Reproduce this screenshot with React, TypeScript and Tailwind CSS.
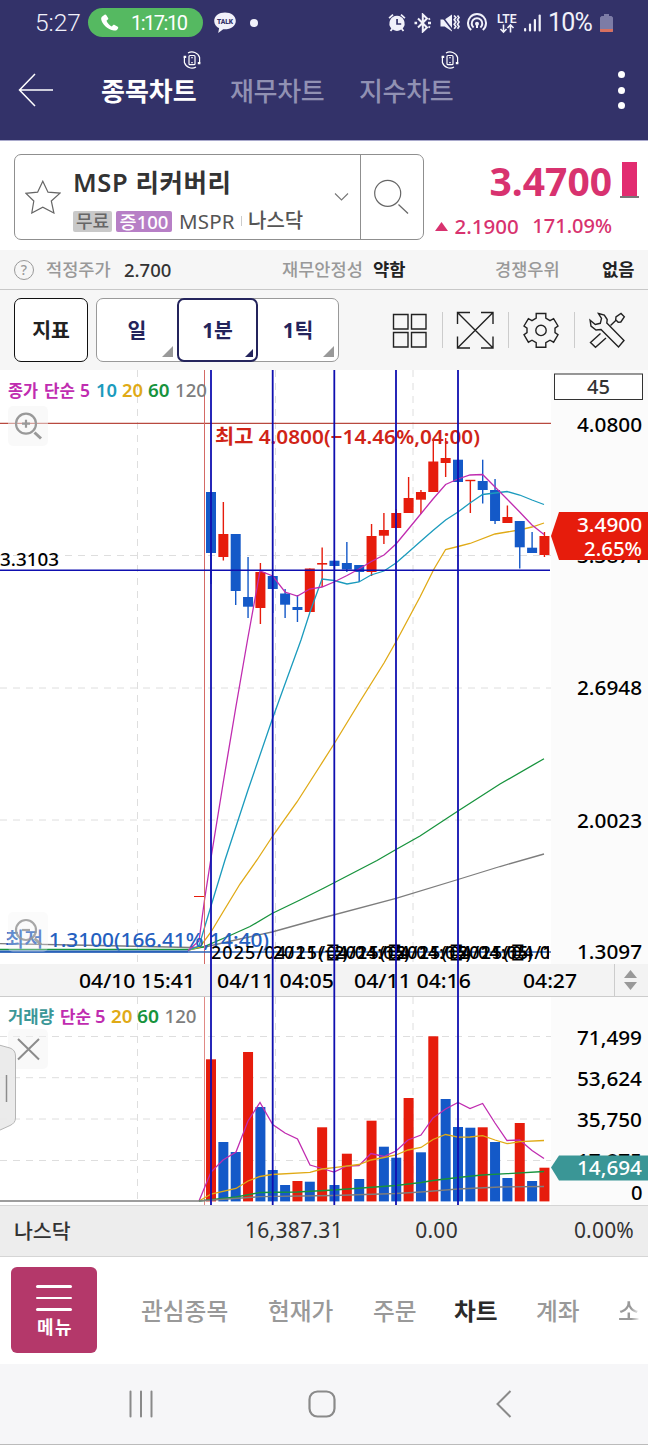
import type { ReactNode } from 'react';
import { clsx } from 'clsx';

const RED = '#e61c0c';
const BLUE = '#1459c8';
const MAGENTA = '#c02cb0';
const CYAN = '#1b9bbd';
const YELLOW = '#e0aa16';
const GREEN = '#17933d';
const GRAY = '#7d7d7d';
const NAVY = '#0f0fb0';

const STEP = 12.35;
const candleX = (index: number) => 211 + STEP * index;

type Candle = {
  up: boolean;
  top: number;
  bottom: number;
  high: number;
  low: number;
  volume: number;
};

const c = (
  up: boolean,
  top: number,
  bottom: number,
  high: number,
  low: number,
  volume: number
): Candle => ({ up, top, bottom, high, low, volume });

// y values are in chart pixels, volume is the top edge of its bar
const candles: Candle[] = [
  c(false, 122, 183, 122, 214, 62.3),
  c(true, 164, 187, 132, 190.5, 145),
  c(false, 164, 221, 164, 235, 155),
  c(false, 227, 236.7, 187, 248, 55),
  c(true, 202, 238, 193, 254, 110),
  c(false, 206, 219, 206, 243, 173),
  c(false, 223.5, 234.7, 219, 248, 188),
  c(false, 237, 240, 225, 252, 184),
  c(true, 198.5, 242, 198.5, 242, 184.7),
  c(true, 193, 194.6, 177.5, 217, 130.3),
  c(false, 190.7, 196, 190.7, 200, 188),
  c(false, 193, 199.5, 172, 202, 156.7),
  c(false, 195, 202, 195, 212, 182),
  c(true, 166, 202, 154, 206, 123.7),
  c(true, 160, 165.7, 143, 174, 149.7),
  c(true, 143, 158, 139, 158, 160.7),
  c(true, 128, 143, 107, 143, 101),
  c(true, 122, 129.7, 120, 144, 155.3),
  c(true, 91.5, 122, 70, 122, 39.3),
  c(true, 88, 93, 68, 107, 102),
  c(false, 89.7, 112, 89.7, 130, 130),
  c(true, 109.8, 111.2, 110, 143, 130.7),
  c(false, 111, 120, 89.7, 133.5, 130.3),
  c(false, 120, 151, 109, 154, 145),
  c(true, 147, 153, 135.5, 153, 181),
  c(false, 151, 177.3, 151, 198.5, 126),
  c(false, 177.7, 183, 162, 183, 184),
  c(true, 166, 185, 162, 187, 170.7),
];

const redVolumes = [0, 3, 7, 9, 11, 13, 16, 18, 22, 25, 27];

const priceLines = [
  {
    color: GRAY,
    points:
      '0,573.7 100,575.5 190,577.5 205,577 240,569 272,562 324,547.5 396,528.3 458,509.5 500,496.5 544,484',
  },
  {
    color: GREEN,
    points:
      '0,579.5 190,579.5 203,577 230,565.5 250,556.5 272,543.5 300,530 324,518 377,490.5 396,479.5 420,466 458,441 500,414 544,388.7',
  },
  {
    color: YELLOW,
    points:
      '188,580.5 200,577 211,562 223,542 240,514 257,490 272.7,466 297,432 320,396 334,374 359,333 384,293 397,270 420,227 434,199 445.6,179.5 458,176.5 470,173.5 495,164 519,160 532,157 544,153',
  },
  {
    color: CYAN,
    points:
      '188,580.5 199,576 211,536 225,490 248,420 272,350 285,314 301,270 310,242 322,209 334,210.5 347,214 359,212 371,205 384,201 396,193 408,182.5 421,171 433,160.5 445.6,150 458,142 470,133 482.6,124.5 495,123 507,121.5 519.7,125 532,130 544,134.5',
  },
  {
    color: MAGENTA,
    points:
      '188,580.5 199,571 204.5,530 211,488 223,414 235.7,338 247.5,270 260,201 272.7,206 285,222 297.4,226 309.7,219 322,217 334,212 347,205.5 359,199 371.4,191.5 384,185 396,174 408,159.5 420.7,144 433,129 445.6,114.5 458,109 470,105 482.6,104.5 495,117 507,129 519.7,142 532,155 544,164.5',
  },
];

const volumeLines = [
  {
    color: MAGENTA,
    points:
      '199,204 211,175 223,163 236,155 248,124 260,105.5 272.7,127.5 285,136 297.5,142 310,168 322,171.5 334,175 347,169 359,168.5 371,156.5 384,159.5 396,154 408,143 421,138 433,121 445.6,112 458,105.5 470,111.5 482.6,106.5 495,126 507,143.5 519.7,143 532,153.5 544,161.5',
  },
  {
    color: YELLOW,
    points:
      '199,204 211,197 236,191.5 248,184 260,179.5 272,177.5 310,175.3 322,172 334,170.7 359,167.5 371,163 384,160.5 396,158 408,153 421,150.5 433,142.5 445.6,137.5 458,140.2 470,140 482.6,138.7 495,143 507,146.7 520,144.7 544,143.5',
  },
  {
    color: GREEN,
    points:
      '199,204 236,200 260,195.5 297,195 334,193 396,188.5 421,185.5 433,183.5 458,180.5 482,178 507,176.7 544,174.5',
  },
  {
    color: GRAY,
    points: '0,204 199,204 260,199.7 334,198.5 396,196.5 421,195 458,192 500,190 544,189.5',
  },
];

const markers = [211, 272.7, 334.3, 396, 458];

const Label = ({
  x,
  y,
  width,
  size = 20,
  weight = 500,
  fill = '#000',
  children,
}: {
  x: number;
  y: number;
  width: number;
  size?: number;
  weight?: number;
  fill?: string;
  children: string;
}) => (
  <text
    x={x}
    y={y}
    fontSize={size}
    fontWeight={weight}
    fill={fill}
    textLength={width}
    lengthAdjust="spacingAndGlyphs"
  >
    {children}
  </text>
);

const RotateIcon = () => (
  <svg width="18" height="18" viewBox="0 0 18 18" fill="none" stroke="#fff" strokeWidth="1.2">
    <path d="M5 2A8 8 0 0 1 16.6 6.500V11.500M13 16A8 8 0 0 1 1.4 11.500V6.500" />
    <path d="M.600 5.800h2.600M14.800 12.200h2.600" strokeWidth="2.200" />
    <rect x="6" y="4.500" width="6" height="9.200" rx="1" />
    <path d="M8.300 6.600h1.400M8.300 11.600h1.400" />
  </svg>
);

const StatusBar = () => (
  <div className="flex h-[45px] items-center pl-[35px] font-[Roboto,sans-serif] text-[#f1f1fa]">
    <span className="w-[53px] text-[24.500px] leading-[45px] font-light">5:27</span>
    <div className="flex h-[29px] w-[115px] items-center rounded-full bg-[#55b961] pl-[13px] text-white">
      <svg width="18" height="18" viewBox="0 0 18 18" fill="currentColor">
        <path d="M1.2 2.6L3.6.7c.6-.4 1.2-.3 1.6.3l1.9 3c.4.6.2 1.200-.3 1.600L5.500 6.700c.900 2.300 2.900 4.500 5.300 5.700l1.300-1.300c.5-.5 1-.6 1.600-.2l3 1.900c.6.4.7 1 .3 1.600-1 1.700-2.200 2.300-4 2.100C6.300 15.700.8 9.800.2 5.300.1 4.100.4 3.300 1.200 2.600z" />
      </svg>
      <span className="ml-[12px] text-[20px] tracking-[-1.5px]">1:17:10</span>
    </div>
    <svg className="ml-[11px]" width="22" height="22" viewBox="0 0 22 22">
      <path
        d="M11 .5C5 .5.200 4 .2 8.900c0 3.300 2 5.800 4.900 7.300L4.200 21l5-3.800c7.400.5 12.600-3.400 12.600-8.300C21.800 4 17 .5 11 .5z"
        fill="#f1f1fa"
      />
      <text
        x="2.900"
        y="12"
        fontSize="7.500"
        fontWeight="900"
        fill="#333269"
        textLength="16.200"
        lengthAdjust="spacingAndGlyphs"
      >
        TALK
      </text>
    </svg>
    <span className="ml-[14px] size-2 rounded-full bg-[#f1f1fa]" />

    <div className="ml-[130px] flex items-center">
      <svg width="18" height="20" viewBox="0 0 18 20" fill="currentColor">
        <path d="M.5 4.500L4.400 1l1.200 1.300L1.700 5.800zM17.500 4.500L13.600 1l-1.200 1.300 3.900 3.500z" />
        <path
          fillRule="evenodd"
          d="M9 2.800a7.600 7.600 0 0 0-5.700 12.600L1.800 17.600l1.400 1 1.600-2a7.600 7.600 0 0 0 8.400 0l1.600 2 1.400-1-1.500-2.200A7.600 7.600 0 0 0 9 2.800zM8.200 6h1.700v4.200h3.300v1.600h-5z"
        />
      </svg>
      <svg
        className="ml-[8px]"
        width="18"
        height="20"
        viewBox="0 0 18 20"
        fill="none"
        stroke="currentColor"
        strokeWidth="2"
      >
        <path d="M4 5.500l9 9-4.200 4V1.500l4.200 4-9 9" />
        <path d="M.5 10h2.600M14 10h3" strokeWidth="2.600" />
        <path d="M14.500 6.500l1.500-1M14.500 13.500l1.500 1" />
      </svg>
      <svg className="ml-[8px]" width="20" height="20" viewBox="0 0 20 20" fill="currentColor">
        <path d="M.5 6.500h4.200L12 1.500v17l-7.300-5H.5z" />
        <path d="M1 2l11.500 15" stroke="#333269" strokeWidth="1.500" />
        <path
          d="M14 2.500l1.900 2-1.700 2.200 1.700 2.300-1.700 2.200 1.700 2.300-1.700 2.300M17.500 2.500l1.500 2-1.500 2.200L19 9l-1.500 2.200L19 13.500l-1.500 2.300"
          fill="none"
          stroke="currentColor"
          strokeWidth="1.700"
        />
      </svg>
      <svg
        className="ml-[7px]"
        width="20"
        height="20"
        viewBox="0 0 20 20"
        fill="none"
        stroke="currentColor"
        strokeWidth="2"
      >
        <path d="M4.200 17A9 9 0 1 1 15.800 17" />
        <path d="M6.600 14.600A5.300 5.300 0 1 1 13.400 14.600" />
        <circle cx="10" cy="10.800" r="2" fill="currentColor" stroke="none" />
        <path d="M10 12v3" />
      </svg>
      <svg className="ml-[9px]" width="22" height="22" viewBox="0 0 22 22" fill="none">
        <text
          x="1"
          y="10.500"
          fontSize="12.500"
          fontWeight="600"
          fill="currentColor"
          textLength="19.500"
          lengthAdjust="spacingAndGlyphs"
        >
          LTE
        </text>
        <path
          d="M7.500 12.500v7.500M4.500 17l3 3.200 3-3.200M14.500 20.500V13M11.500 16l3-3.200 3 3.200"
          stroke="currentColor"
          strokeWidth="1.600"
        />
      </svg>
      <svg className="ml-[6px]" width="17" height="18" viewBox="0 0 17 18" fill="currentColor">
        <rect x="0" y="14" width="2.200" height="3.600" rx="1" />
        <rect x="4.900" y="9.500" width="2.200" height="8" rx="1" />
        <rect x="9.800" y="5" width="2.200" height="12.500" rx="1" />
        <rect x="14.600" y="0.500" width="2.200" height="17" rx="1" />
      </svg>
      <span className="ml-[7px] w-[52px] text-[25px] leading-[45px] tracking-[-0.800px]">10%</span>
      <svg width="13" height="20" viewBox="0 0 13 20">
        <path d="M4 1h5v2h2.500L13 4.500V19H0V4.500L1.500 3H4z" fill="#7d7ca6" />
        <path d="M0 16h13v1.500a1.500 1.500 0 0 1-1.500 1.500h-10A1.500 1.500 0 0 1 0 17.500z" fill="#d8705f" />
      </svg>
    </div>
  </div>
);

const headerTabs = [
  { name: '종목차트', rotatable: true, active: true },
  { name: '재무차트', rotatable: false, active: false },
  { name: '지수차트', rotatable: true, active: false },
];

const Header = () => (
  <header className="h-[140px] bg-[#333269]">
    <StatusBar />
    <div className="flex h-[95px] pl-[18px]">
      <svg
        className="mt-[28px]"
        width="36"
        height="34"
        viewBox="0 0 36 34"
        fill="none"
        stroke="#fff"
        strokeWidth="1.500"
      >
        <path d="M17 1L1.500 17 17 33M1.500 17H35" />
      </svg>
      <nav className="ml-[47px] flex w-[504px] gap-[33px]">
        {headerTabs.map((tab) => (
          <div key={tab.name} className="flex w-24 flex-col">
            <div className="flex h-[26px] justify-end pt-[6px]">
              <div className="mr-[-4px] h-[18px] w-[18px]">{tab.rotatable && <RotateIcon />}</div>
            </div>
            <span
              className={clsx(
                'text-[26px] leading-[40px] whitespace-nowrap',
                tab.active
                  ? 'font-bold text-white'
                  : 'font-medium tracking-[-0.300px] text-[#9191b3]'
              )}
            >
              {tab.name}
            </span>
          </div>
        ))}
      </nav>
      <div className="mt-[26px] ml-[12.500px] flex flex-col gap-[8.500px]">
        <span className="size-[7px] rounded-full bg-white" />
        <span className="size-[7px] rounded-full bg-white" />
        <span className="size-[7px] rounded-full bg-white" />
      </div>
    </div>
  </header>
);

const StockSummary = () => (
  <section className="flex h-[110px] border-t border-[#a9a9cc] bg-white pt-[13px] pl-[14px]">
    <div className="flex h-[86px] w-[410px] rounded-[7px] border border-[#8f8f8f]">
      <svg
        className="mt-[25px] ml-[10px]"
        width="36"
        height="34"
        viewBox="0 0 36 34"
        fill="none"
        stroke="#666"
        strokeWidth="1.200"
      >
        <path d="M17.800 1.200l5.200 11 12 .9-8.700 7.900 2.600 12-11.100-5.900L6.800 33l2-12L.8 13.300l11.800-1.100z" />
      </svg>
      <div className="ml-[12px] w-[261px]">
        <h1 className="mt-[8px] text-[25.500px] leading-[38px] font-semibold tracking-[0.600px] whitespace-nowrap text-[#333]">
          MSP 리커버리
        </h1>
        <div className="mt-[10px] flex h-5 items-center text-[20px] leading-[20px] whitespace-nowrap text-[#555]">
          <span className="h-[21px] w-[39px] rounded-[2px] bg-[#c9c9c9] text-center text-[18px] leading-[21px] font-medium text-[#666]">
            무료
          </span>
          <span className="ml-1 h-[21px] w-[56px] rounded-[2px] bg-[#b77fc6] text-center text-[18.500px] leading-[21px] font-medium text-white">
            증100
          </span>
          <span className="ml-[7px] w-[58px] text-[20.500px] tracking-[0.200px]">MSPR</span>
          <span className="ml-[4px] h-[10px] w-px bg-[#ccc]" />
          <span className="ml-[6px] font-medium">나스닥</span>
        </div>
      </div>
      <svg
        className="mt-[37px]"
        width="16"
        height="10"
        viewBox="0 0 16 10"
        fill="none"
        stroke="#777"
        strokeWidth="1.100"
      >
        <path d="M1 1.500l6.500 6.500 6.500-6.500" />
      </svg>
      <div className="ml-[10px] flex-1 border-l border-[#8f8f8f] pt-[24px] pl-[13px]">
        <svg width="36" height="36" viewBox="0 0 36 36" fill="none" stroke="#666" strokeWidth="1.200">
          <circle cx="13.700" cy="14.300" r="13" />
          <path d="M24.500 25.500l9.500 9" />
        </svg>
      </div>
    </div>
    <div className="ml-[11px] w-[177px] text-[#d8326f]">
      <p className="mt-[-1px] text-right text-[39px] leading-[56px] font-bold">3.4700</p>
      <div className="flex h-[34px] items-center justify-between text-[20.500px]">
        <svg width="13" height="9" viewBox="0 0 13 9" fill="currentColor">
          <path d="M6.500 0L13 9H0z" />
        </svg>
        <span className="font-medium">2.1900</span>
        <span className="ml-[7px] text-[20px] font-medium">171.09%</span>
      </div>
    </div>
    <div className="mt-[8px] ml-2 flex h-[36px] w-[19px] flex-col items-center border-b-2 border-[#777]">
      <span className="h-[34px] w-[15px] bg-[#e22c70]" />
    </div>
  </section>
);

const FairValue = () => (
  <section className="flex h-[40px] items-center border-b border-[#c8c8c8] bg-[#f6f6f6] pl-[14px] text-[17.600px] font-medium whitespace-nowrap text-[#999]">
    <span className="flex size-[20px] items-center justify-center rounded-full border border-[#999] text-[14px] leading-none">
      ?
    </span>
    <span className="ml-3 w-[66px]">적정주가</span>
    <span className="ml-[12px] w-[158px] text-[18.500px] text-[#333]">2.700</span>
    <span className="w-[82px]">재무안정성</span>
    <span className="ml-[9px] w-[122px] font-bold text-[#222]">약함</span>
    <span className="w-[65px]">경쟁우위</span>
    <span className="ml-[42px] font-bold text-[#222]">없음</span>
  </section>
);

const Corner = ({ selected = false }: { selected?: boolean }) =>
  selected ? (
    <svg className="absolute right-[3px] bottom-[3px]" width="8" height="8" viewBox="0 0 8 8">
      <path d="M8 0v8H0z" fill="#24245c" />
    </svg>
  ) : (
    <svg className="absolute right-[4px] bottom-[4px]" width="11" height="11" viewBox="0 0 11 11">
      <path d="M11 0v11H0z" fill="#999" />
    </svg>
  );

const ToolIcon = ({ children }: { children: ReactNode }) => (
  <svg width="38" height="38" viewBox="0 0 38 38" fill="none" stroke="#222" strokeWidth="1.400">
    {children}
  </svg>
);

const Toolbar = () => (
  <section className="flex h-[80px] bg-[#f6f6f6] pt-[8px] pl-[14px] text-[20.500px] leading-[62px] font-bold">
    <button className="h-[64px] w-[74px] rounded-[7px] border border-[#111] bg-white text-[#222]">
      지표
    </button>
    <div className="ml-2 flex h-[64px] w-[243px] rounded-[7px] border border-[#999] bg-white text-[#24245c]">
      <button className="relative w-[80px]">
        일
        <Corner />
      </button>
      <button className="relative -mt-px h-[64px] w-[81px] rounded-[7px] border-2 border-[#24245c] leading-[60px]">
        1분
        <Corner selected />
      </button>
      <button className="relative w-[80px]">
        1틱
        <Corner />
      </button>
    </div>
    <div className="mt-[13px] ml-[51px] flex h-[38px] items-center gap-[13.500px]">
      <ToolIcon>
        <path d="M3.500 3.500h14.500v14.500H3.500zM21.500 3.500H36v14.500H21.500zM3.500 21.500h14.500V36H3.500zM21.500 21.500H36V36H21.500z" />
      </ToolIcon>
      <span className="h-9 w-px bg-[#ccc]" />
      <ToolIcon>
        <path d="M1.500 13V1.500H14M25 1.500h12V13M37 25.500V37H25M14 37H1.500V25.500M1.500 1.500L37 37M37 1.500L1.500 37" />
      </ToolIcon>
      <span className="h-9 w-px bg-[#ccc]" />
      <ToolIcon>
        <path d="M14.200 2.500h9.600v4.700l4.200 2.400 3.600-2 4.400 7.400-3 2.200v4.400l3 2.200-4.400 7.400-3.600-2-4.200 2.400v4.700h-9.600v-4.700L10 29.200l-3.600 2L2 23.800l3-2.200v-4.400L2 15l4.400-7.400 3.600 2 4.200-2.400z" />
        <circle cx="19" cy="19.400" r="5.200" />
      </ToolIcon>
      <span className="h-9 w-px bg-[#ccc]" />
      <ToolIcon>
        <path d="M10.500 2.500l5.800 1.500 2.900 4.500-.4 3.600L36 29.500l-5.500 6.500L13 18.500l-5 .500-5-4-.900-5.800 5.200 4.300 5-1.200 1.200-5z" />
        <path d="M12.500 22.500L2.500 31.500l5 4.800 10.500-9.300M22.500 14.500l5.500-5.300M28 5.800l5-3.300 3.300 3.300-3.500 5.200-2.600.300-2.500-2.600z" />
      </ToolIcon>
    </div>
  </section>
);

const PriceChart = () => (
  <svg className="block" width="648" height="594" viewBox="0 0 648 594">
    <defs>
      <clipPath id="plot">
        <rect width="549" height="594" />
      </clipPath>
    </defs>
    <rect width="648" height="594" fill="#fff" />
    <g stroke="#dedede" strokeDasharray="7 6">
      <path d="M0 185.500H551M0 318H551M0 450H551M137.500 0V594M275.500 0V594M413 0V594" />
    </g>
    <g fill="none" strokeWidth="1.300">
      {priceLines.slice(0, 3).map((line) => (
        <polyline key={line.color} points={line.points} stroke={line.color} />
      ))}
    </g>
    {candles.map((candle, i) => {
      const color = candle.up ? RED : BLUE;
      const x = candleX(i);
      return (
        <g key={i} fill={color}>
          <rect x={x - 0.7} y={candle.high} width="1.400" height={candle.low - candle.high} />
          <rect x={x - 5} y={candle.top} width="10" height={candle.bottom - candle.top} />
        </g>
      );
    })}
    <g fill="none" strokeWidth="1.300">
      {priceLines.slice(3).map((line) => (
        <polyline key={line.color} points={line.points} stroke={line.color} />
      ))}
    </g>
    <path d="M194 526.500h10" stroke={RED} />
    <path d="M0 53.300H551" stroke="#b8493f" strokeWidth="1.200" />
    <path d="M204.500 0V594" stroke="#d46a66" />
    <path d="M0 582H551" stroke="#2a62b8" strokeWidth="1.300" />
    <path d="M0 581.500H188" stroke="#2a62b8" strokeWidth="2" />
    <path d="M0 200.300H550" stroke={NAVY} strokeWidth="1.600" />

    <Label x={8} y={26.700} width={30} size={17} weight={700} fill={MAGENTA}>종가</Label>
    <Label x={44} y={26.700} width={31} size={17} weight={700} fill={MAGENTA}>단순</Label>
    <Label x={80} y={26.700} width={10} size={18.500} weight={600} fill={MAGENTA}>5</Label>
    <Label x={96} y={26.700} width={21} size={18.500} weight={600} fill={CYAN}>10</Label>
    <Label x={122} y={26.700} width={21} size={18.500} weight={600} fill={YELLOW}>20</Label>
    <Label x={148} y={26.700} width={21.500} size={18.500} weight={600} fill={GREEN}>60</Label>
    <Label x={175} y={26.700} width={32} size={18.500} fill={GRAY}>120</Label>

    <Label x={215} y={73.500} width={265} weight={600} fill="#d02417">
      최고 4.0800(−14.46%,04:00)
    </Label>
    <Label x={5} y={576.500} width={264} weight={500} fill="#245fc0">
      최저 1.3100(166.41%,14:40)
    </Label>
    <Label x={0} y={196} width={59} size={18.500}>3.3103</Label>
    <g clipPath="url(#plot)" fontSize="18" fontWeight="500">
      {markers.map((x) => (
        <text key={x} x={x} y="589" textLength="194">
          2025/04/11(금) 04:05
        </text>
      ))}
    </g>

    <g>
      <rect x="8" y="36" width="40" height="40" rx="5" fill="#f3f3f3" opacity="0.500" />
      <g fill="none" stroke="#999" strokeWidth="2.200">
        <circle cx="26" cy="53.700" r="10" />
        <path d="M22 53.700h8M26 49.700v8" />
        <path d="M34.500 62.500l6.500 6" strokeWidth="3" />
      </g>
      <rect x="8" y="542" width="40" height="40" rx="5" fill="#f3f3f3" opacity="0.300" />
      <g fill="none" stroke="#999" strokeWidth="2.200" opacity="0.850">
        <circle cx="26" cy="560" r="10" />
        <path d="M22 560h8" />
        <path d="M34.500 568.500l6.500 6" strokeWidth="3" />
      </g>
    </g>

    <rect x="551" width="97" height="594" fill="#fbfbfb" />
    <rect x="554.500" y="4" width="88" height="25.500" fill="#fff" stroke="#333" />
    <Label x={587} y={23.700} width={23} fill="#333">45</Label>
    <Label x={577} y={61.500} width={65}>4.0800</Label>
    <Label x={577} y={193} width={65}>3.3874</Label>
    <Label x={577} y={325.200} width={65}>2.6948</Label>
    <Label x={577} y={457.700} width={65}>2.0023</Label>
    <Label x={577} y={589.300} width={65}>1.3097</Label>
    <path d="M551 166l8-24h89v48h-89z" fill={RED} />
    <Label x={577} y={161.500} width={65} fill="#fff">3.4900</Label>
    <Label x={584} y={186} width={58} fill="#fff">2.65%</Label>
  </svg>
);

const TimeAxis = () => (
  <div className="flex h-[33px] border-b border-[#ccc] bg-[#f3f3f3]">
    <svg className="block" width="614" height="32" viewBox="0 0 614 32">
      <Label x={79} y={24} width={116}>04/10 15:41</Label>
      <Label x={217} y={24} width={117}>04/11 04:05</Label>
      <Label x={354} y={24} width={117}>04/11 04:16</Label>
      <Label x={523} y={24} width={54}>04:27</Label>
    </svg>
    <div className="flex flex-1 flex-col items-center justify-center gap-[4px] border-l border-[#ccc] pr-[2px]">
      <svg width="13" height="8" viewBox="0 0 13 8">
        <path d="M6.500 0L13 8H0z" fill="#999" />
      </svg>
      <svg width="13" height="8" viewBox="0 0 13 8">
        <path d="M6.500 8L13 0H0z" fill="#999" />
      </svg>
    </div>
  </div>
);

const VolumeChart = () => (
  <svg className="block" width="648" height="208" viewBox="0 0 648 208">
    <rect width="648" height="208" fill="#fff" />
    <g stroke="#dedede" strokeDasharray="7 6">
      <path d="M0 39.500H551M0 80.700H551M0 122H551M0 163.500H551M137.500 0V204M275.500 0V204M413 0V204" />
    </g>
    <path d="M204.500 0V208" stroke="#e08a86" />
    {candles.map((candle, i) => (
      <rect
        key={i}
        x={candleX(i) - 5}
        y={candle.volume}
        width="10"
        height={204.4 - candle.volume}
        fill={redVolumes.includes(i) ? RED : BLUE}
      />
    ))}
    <g fill="none" strokeWidth="1.300">
      {volumeLines.map((line) => (
        <polyline key={line.color} points={line.points} stroke={line.color} />
      ))}
    </g>
    <Label x={8} y={25.700} width={46} size={17} weight={700} fill="#3b9797">거래량</Label>
    <Label x={60} y={25.700} width={31} size={17} weight={700} fill={MAGENTA}>단순</Label>
    <Label x={95} y={25.700} width={10.500} size={18.500} weight={600} fill={MAGENTA}>5</Label>
    <Label x={111} y={25.700} width={21.500} size={18.500} weight={600} fill={YELLOW}>20</Label>
    <Label x={137} y={25.700} width={22} size={18.500} weight={600} fill={GREEN}>60</Label>
    <Label x={164.500} y={25.700} width={32} size={18.500} fill={GRAY}>120</Label>

    <rect x="8" y="32" width="40" height="40" rx="5" fill="#f3f3f3" opacity="0.500" />
    <path d="M18 42l21 20.500M39 42L18 62.500" stroke="#8c8c8c" strokeWidth="2" />
    <path
      d="M-1 48l11 3q5.500 2 5.500 8v62q0 5-5.500 7.500l-11 5z"
      fill="#e9e9e9"
      fillOpacity="0.900"
      stroke="#b5b5b5"
    />
    <path d="M6.500 78v27" stroke="#8c8c8c" strokeWidth="1.500" />

    <rect x="551" width="97" height="208" fill="#fbfbfb" />
    <Label x={577} y={47.700} width={65}>71,499</Label>
    <Label x={577} y={88.700} width={65}>53,624</Label>
    <Label x={577} y={130} width={65}>35,750</Label>
    <Label x={577} y={170.500} width={65}>17,875</Label>
    <Label x={631} y={203} width={11.500}>0</Label>
    <path d="M551 170.500l8-12h89v25h-89z" fill="#3a9696" />
    <Label x={577} y={178} width={65} fill="#fff">14,694</Label>
  </svg>
);

const Charts = () => (
  <section className="relative">
    <PriceChart />
    <TimeAxis />
    <VolumeChart />
    {/* period markers run through both charts and the time axis */}
    <svg className="absolute inset-0" width="648" height="835" viewBox="0 0 648 835">
      {markers.map((x) => (
        <path key={x} d={`M${x} 0V835`} stroke={NAVY} strokeWidth="1.800" />
      ))}
    </svg>
  </section>
);

const IndexBar = () => (
  <section className="flex h-[52px] items-center border-y border-[#d5d5d5] bg-[#ededed] pr-[14px] pl-[14px] text-[21px] text-[#333]">
    <span className="w-[159px] text-[20.500px] font-medium">나스닥</span>
    <span className="w-[170px] text-right tracking-[0.300px]">16,387.31</span>
    <span className="w-[115px] text-right tracking-[0.300px]">0.00</span>
    <span className="flex-1 text-right tracking-[0.200px]">0.00%</span>
  </section>
);

const BottomNav = () => (
  <nav className="flex h-[107px] items-start bg-white pt-[10px] pl-[11px] text-[23.700px] leading-[88px] font-medium whitespace-nowrap text-[#999]">
    <button className="flex h-[86px] w-[86px] flex-col items-center rounded-[6px] bg-[#b4386a] pt-[18px] text-white">
      <span className="h-[2.500px] w-[36px] rounded-full bg-white" />
      <span className="mt-[9px] h-[2.500px] w-[36px] rounded-full bg-white" />
      <span className="mt-[9px] h-[2.500px] w-[36px] rounded-full bg-white" />
      <span className="mt-[4px] pl-[2px] text-[18px] leading-[24px] font-bold tracking-[1.500px]">
        메뉴
      </span>
    </button>
    <span className="ml-[44px] w-[127px]">관심종목</span>
    <span className="w-[105px]">현재가</span>
    <span className="w-[81px]">주문</span>
    <span className="w-[82px] font-bold text-[#2b2b2b]">차트</span>
    <span className="w-[82px]">계좌</span>
    <span className="w-[22px] bg-gradient-to-r from-[#999] from-60% to-white bg-clip-text text-transparent">
      소
    </span>
  </nav>
);

const SystemNav = () => (
  <footer className="flex h-[81px] items-center border-b border-[#bbb] bg-[#f6f6f8] pl-[129px]">
    <svg width="24" height="28" viewBox="0 0 24 28" stroke="#8a8a8a" strokeWidth="2">
      <path d="M1.500 1.500v25M12 1.500v25M22.500 1.500v25" strokeLinecap="round" />
    </svg>
    <svg
      className="ml-[155px]"
      width="28"
      height="28"
      viewBox="0 0 28 28"
      fill="none"
      stroke="#8a8a8a"
      strokeWidth="2.200"
    >
      <rect x="1.500" y="1.500" width="25" height="25" rx="8" />
    </svg>
    <svg
      className="ml-[160px]"
      width="16"
      height="28"
      viewBox="0 0 16 28"
      fill="none"
      stroke="#8a8a8a"
      strokeWidth="2"
    >
      <path d="M14.500 1L1.500 14l13 13" />
    </svg>
  </footer>
);

export default function App() {
  return (
    <div className="w-[648px] overflow-hidden bg-white font-['Noto_Sans','Noto_Sans_CJK_KR',sans-serif]">
      <Header />
      <StockSummary />
      <FairValue />
      <Toolbar />
      <Charts />
      <IndexBar />
      <BottomNav />
      <SystemNav />
    </div>
  );
}
